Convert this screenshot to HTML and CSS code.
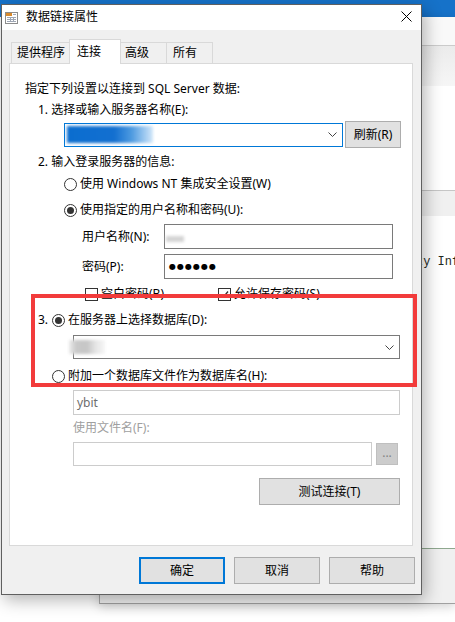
FILE: index.html
```html
<!DOCTYPE html>
<html>
    <head>
        <meta charset="utf-8" />
        <title>数据链接属性</title>
        <link rel="stylesheet" href="styles.css">
    </head>
    <body>
        <!-- windows behind the dialog -->
        <div class="app-bar"></div>
        <div class="back-window">
            <div class="bw-head"></div>
            <div class="bw-toolbar"></div>
            <div class="bw-pane"></div>
            <div class="bw-strip"></div>
            <div class="bw-code"><span class="code-line">ty Info</span></div>
            <div class="bw-status"></div>
        </div>

        <div class="dialog">
            <div class="titlebar">
                <svg class="title-icon" viewBox="0 0 13 14">
                    <rect x="0.5" y="2.5" width="12" height="11" fill="#fff" stroke="#8c8c8c"/>
                    <rect x="1" y="3" width="6" height="3" fill="#d7892c"/>
                    <path d="M8 4.5h3M2 7.5h9M2 9.5h9M2 11.5h9M5.5 7v5M8.5 7v5" stroke="#9ea6b4" fill="none"/>
                </svg>
                <span class="title-text">数据链接属性</span>
                <svg class="close" viewBox="0 0 11 11">
                    <path d="M0.5 0.5L10.5 10.5M10.5 0.5L0.5 10.5" stroke="#000" stroke-width="1" fill="none"/>
                </svg>
            </div>

            <div class="dialog-body">
                <div class="tabs">
                    <div class="tab tab-provider">提供程序</div>
                    <div class="tab tab-active">连接</div>
                    <div class="tab tab-adv">高级</div>
                    <div class="tab tab-all">所有</div>
                </div>

                <div class="panel">
                    <div class="row row-intro">指定下列设置以连接到 SQL Server 数据:</div>
                    <div class="row row-step1">1. 选择或输入服务器名称(E):</div>
                    <div class="row row-server">
                        <div class="combo combo-server">
                            <span class="redact-sel"></span>
                            <svg class="chevron" viewBox="0 0 9 5"><polyline points="0.5,0.5 4.5,4.5 8.5,0.5" fill="none" stroke="#444"/></svg>
                        </div>
                        <div class="btn btn-refresh">刷新(R)</div>
                    </div>
                    <div class="row row-step2">2. 输入登录服务器的信息:</div>
                    <div class="row row-nt"><span class="radio"></span>使用 Windows NT 集成安全设置(W)</div>
                    <div class="row row-user"><span class="radio radio-on"></span>使用指定的用户名称和密码(U):</div>
                    <div class="row row-field row-name">
                        <span class="field-label">用户名称(N):</span>
                        <div class="input"><span class="redact-name"></span></div>
                    </div>
                    <div class="row row-field row-pass">
                        <span class="field-label">密码(P):</span>
                        <div class="input"><span class="dots">●●●●●●</span></div>
                    </div>
                    <div class="row row-checks">
                        <span class="check-item check-blank"><span class="check"></span>空白密码(B)</span>
                        <span class="check-item"><span class="check"><svg viewBox="0 0 11 11"><polyline points="2,5.5 4.5,8 9,2.5" fill="none" stroke="#333" stroke-width="1.3"/></svg></span>允许保存密码(S)</span>
                    </div>
                    <div class="row row-step3"><span class="step-num">3.</span><span class="radio radio-on"></span>在服务器上选择数据库(D):</div>
                    <div class="row row-db">
                        <div class="combo combo-db">
                            <span class="redact-db"></span>
                            <svg class="chevron" viewBox="0 0 9 5"><polyline points="0.5,0.5 4.5,4.5 8.5,0.5" fill="none" stroke="#444"/></svg>
                        </div>
                    </div>
                    <div class="row row-attach"><span class="radio"></span>附加一个数据库文件作为数据库名(H):</div>
                    <div class="row row-dbname">
                        <div class="input input-off input-dbname">ybit</div>
                    </div>
                    <div class="row row-filelabel">使用文件名(F):</div>
                    <div class="row row-file">
                        <div class="input input-off input-file"></div>
                        <div class="btn btn-browse">...</div>
                    </div>
                    <div class="row row-test">
                        <div class="btn btn-test">测试连接(T)</div>
                    </div>
                </div>

                <div class="actions">
                    <div class="btn btn-action btn-default">确定</div>
                    <div class="btn btn-action">取消</div>
                    <div class="btn btn-action">帮助</div>
                </div>
            </div>

            <!-- red highlight drawn over the screenshot -->
            <div class="annotation"></div>
        </div>
    </body>
</html>
```

FILE: styles.css
```css
* {
  box-sizing: border-box;
}
html, body {
  margin: 0;
  padding: 0;
}
body {
  width: 455px;
  height: 622px;
  overflow: hidden;
  position: relative;
  background: #fff;
  font-family: "Noto Sans", "Noto Sans CJK SC", sans-serif;
  font-size: 12px;
  line-height: 16px;
  color: #000;
}

/** background windows **/

.app-bar {
  position: absolute;
  top: 0;
  left: 0;
  right: 0;
  height: 17px;
  background: #1672c9;
}
.back-window {
  position: absolute;
  left: 99px;
  top: 17px;
  right: 0;
  height: 587px;
  border-left: 1px solid #a8a8a8;
  border-bottom: 1px solid #a0a0a0;
  background: #fff;
  display: flex;
  flex-direction: column;
  box-shadow: 0 3px 10px rgba(0, 0, 0, 0.18);
}
.bw-head {
  height: 29px;
  background: #f9f9f9;
  border-bottom: 1px solid #cbcbcb;
}
.bw-toolbar {
  height: 40px;
  background: linear-gradient(#ebebeb, #f6f6f6);
}
.bw-pane {
  height: 105px;
  background: #fff;
  border-bottom: 1px solid #c6c6c6;
}
.bw-strip {
  height: 25px;
  background: #f0f0f0;
}
.bw-code {
  height: 333px;
  background: #fff;
  border-bottom: 1px solid #8fa88f;
  padding-top: 38px;
  overflow: hidden;
}
.code-line {
  display: block;
  margin-left: 316px;
  font-family: "Liberation Mono", monospace;
  font-size: 12px;
  color: #1e2a1e;
  white-space: nowrap;
}
.bw-status {
  flex: 1;
  background: #f0f0f0;
}

/** dialog **/

.dialog {
  position: absolute;
  left: 1px;
  top: 4px;
  width: 421px;
  height: 591px;
  border: 1px solid #606060;
  background: #f0f0f0;
  box-shadow: 3px 5px 16px rgba(0, 0, 0, 0.3);
  display: flex;
  flex-direction: column;
}
.titlebar {
  height: 25px;
  flex: none;
  background: #fff;
  display: flex;
  align-items: center;
  padding: 0 0 2px 3px;
}
.title-icon {
  width: 13px;
  height: 14px;
  flex: none;
}
.title-text {
  margin-left: 8px;
}
.close {
  width: 11px;
  height: 11px;
  margin-left: auto;
  margin-right: 9px;
}
.dialog-body {
  flex: 1;
  padding: 9px 8px 9px 7px;
  display: flex;
  flex-direction: column;
}

/** tabs **/

.tabs {
  height: 25px;
  flex: none;
  display: flex;
  align-items: flex-end;
  padding-left: 2px;
  position: relative;
  z-index: 1;
}
.tab {
  height: 21px;
  margin-bottom: 1px;
  margin-left: -1px;
  border: 1px solid #d9d9d9;
  border-bottom: 0;
  background: #f0f0f0;
  padding-left: 5px;
  display: flex;
  align-items: center;
  white-space: nowrap;
}
.tab-provider {
  width: 59px;
  margin-left: 0;
}
.tab-active {
  width: 52px;
  height: 25px;
  margin-bottom: 0;
  padding-left: 7px;
  padding-bottom: 1px;
  background: #fff;
  position: relative;
  z-index: 2;
}
.tab-adv {
  width: 47px;
  padding-left: 4px;
}
.tab-all {
  width: 47px;
  padding-left: 6px;
}

.panel {
  margin-top: -1px;
  height: 483px;
  flex: none;
  background: #fff;
  border: 1px solid #d9d9d9;
  display: flex;
  flex-direction: column;
}

/** rows **/

.row {
  height: 20px;
  flex: none;
  display: flex;
  align-items: center;
  white-space: nowrap;
}
.row-intro {
  margin-top: 15px;
  padding-left: 15px;
}
.row-step1 {
  margin-top: 1px;
  padding-left: 28px;
}
.row-server {
  height: 27px;
  margin-top: 1px;
  padding-left: 54px;
}
.row-step2 {
  margin-top: 4px;
  padding-left: 28px;
}
.row-nt {
  margin-top: 2px;
  padding-left: 54px;
}
.row-user {
  margin-top: 6px;
  padding-left: 54px;
}
.row-field {
  height: 25px;
  padding-left: 72px;
}
.row-name {
  margin-top: 4px;
}
.row-pass {
  margin-top: 5px;
}
.row-checks {
  margin-top: 5px;
  padding-left: 75px;
}
.row-step3 {
  margin-top: 6px;
  padding-left: 28px;
}
.row-db {
  height: 24px;
  margin-top: 5px;
  padding-left: 63px;
}
.row-attach {
  margin-top: 7px;
  padding-left: 42px;
}
.row-dbname {
  height: 25px;
  margin-top: 4px;
  padding-left: 63px;
}
.row-filelabel {
  margin-top: 3px;
  padding-left: 63px;
  color: #a0a0a0;
}
.row-file {
  height: 24px;
  margin-top: 4px;
  padding-left: 63px;
}
.row-test {
  height: 27px;
  margin-top: 12px;
  padding-left: 249px;
}

/** controls **/

.combo {
  height: 24px;
  border: 1px solid #7a7a7a;
  background: #fff;
  display: flex;
  align-items: center;
}
.combo-server {
  width: 279px;
  border-color: #0078d7;
}
.combo-db {
  width: 327px;
}
.chevron {
  width: 9px;
  height: 5px;
  margin-left: auto;
  margin-right: 5px;
}
.redact-sel {
  width: 86px;
  height: 17px;
  margin-left: 2px;
  background: linear-gradient(90deg, #0a6dcf 0, #136fd0 55%, #4d9ae0 75%, #9cc8f0 90%, #d4e8f9 100%);
  filter: blur(1.5px);
}
.redact-name {
  width: 18px;
  height: 6px;
  margin-top: 5px;
  margin-left: -2px;
  background: #d4d4d4;
  filter: blur(1.5px);
}
.redact-db {
  width: 36px;
  height: 14px;
  margin-left: -5px;
  background: linear-gradient(90deg, #ececec 0, #c9c9c9 20%, #c6c6c6 50%, #e6e6e6 75%, #f6f6f6 100%);
  filter: blur(1.5px);
}

.btn {
  height: 27px;
  border: 1px solid #adadad;
  background: #e1e1e1;
  display: flex;
  align-items: center;
  justify-content: center;
  white-space: nowrap;
}
.btn-refresh {
  width: 56px;
  margin-left: 2px;
}
.btn-browse {
  width: 22px;
  height: 22px;
  margin-left: 4px;
  background: #cccccc;
  border-color: #bfbfbf;
  color: #838383;
  padding-bottom: 3px;
}
.btn-test {
  width: 141px;
}

.radio {
  width: 13px;
  height: 13px;
  flex: none;
  border: 1px solid #333;
  border-radius: 50%;
  background: #fff;
  margin-right: 3px;
  display: flex;
  align-items: center;
  justify-content: center;
}
.radio-on::after {
  content: '';
  width: 7px;
  height: 7px;
  border-radius: 50%;
  background: #333;
}
.step-num {
  width: 14px;
}

.field-label {
  width: 82px;
}
.input {
  width: 229px;
  height: 25px;
  border: 1px solid #7a7a7a;
  background: #fff;
  display: flex;
  align-items: center;
  padding-left: 3px;
}
.dots {
  font-family: "DejaVu Sans", sans-serif;
  font-size: 8px;
  letter-spacing: 1px;
  padding-left: 1px;
}
.input-off {
  border-color: #cccccc;
  color: #6d6d6d;
}
.input-dbname {
  width: 327px;
}
.input-file {
  width: 299px;
  height: 24px;
}

.check-item {
  display: flex;
  align-items: center;
}
.check-blank {
  width: 133px;
}
.check {
  width: 13px;
  height: 13px;
  flex: none;
  border: 1px solid #333;
  background: #fff;
  margin-right: 3px;
  display: flex;
}
.check svg {
  width: 11px;
  height: 11px;
}

/** dialog buttons **/

.actions {
  margin-top: 11px;
  margin-right: -2px;
  display: flex;
  justify-content: flex-end;
  gap: 9px;
}
.btn-action {
  width: 86px;
}
.btn-default {
  border: 2px solid #0078d7;
}

.annotation {
  position: absolute;
  left: 29px;
  top: 289px;
  width: 386px;
  height: 93px;
  border: 4px solid #f23b3b;
}
```
